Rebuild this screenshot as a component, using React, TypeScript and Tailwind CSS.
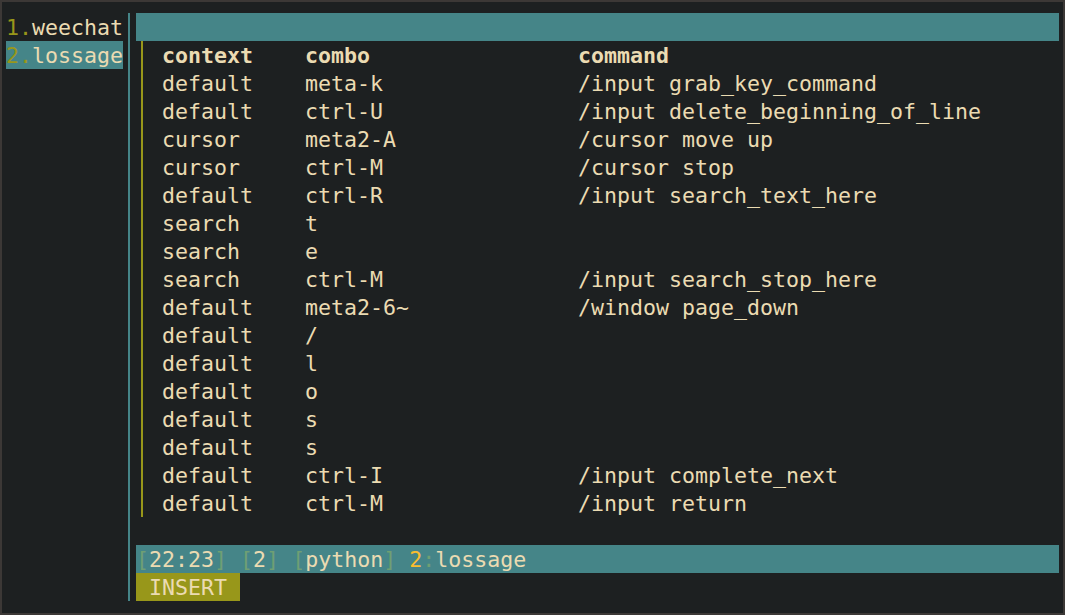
import React from 'react';

const rows = [
  { context: 'default', combo: 'meta-k', command: '/input grab_key_command' },
  { context: 'default', combo: 'ctrl-U', command: '/input delete_beginning_of_line' },
  { context: 'cursor', combo: 'meta2-A', command: '/cursor move up' },
  { context: 'cursor', combo: 'ctrl-M', command: '/cursor stop' },
  { context: 'default', combo: 'ctrl-R', command: '/input search_text_here' },
  { context: 'search', combo: 't', command: '' },
  { context: 'search', combo: 'e', command: '' },
  { context: 'search', combo: 'ctrl-M', command: '/input search_stop_here' },
  { context: 'default', combo: 'meta2-6~', command: '/window page_down' },
  { context: 'default', combo: '/', command: '' },
  { context: 'default', combo: 'l', command: '' },
  { context: 'default', combo: 'o', command: '' },
  { context: 'default', combo: 's', command: '' },
  { context: 'default', combo: 's', command: '' },
  { context: 'default', combo: 'ctrl-I', command: '/input complete_next' },
  { context: 'default', combo: 'ctrl-M', command: '/input return' },
];

function Line({ a, b, c, bold }: { a: string; b: string; c: string; bold?: boolean }) {
  return (
    <div className={`flex h-[28px] ${bold ? 'font-bold' : ''}`}>
      <span className="w-[143px] shrink-0 whitespace-pre">{a}</span>
      <span className="w-[273px] shrink-0 whitespace-pre">{b}</span>
      <span className="whitespace-pre">{c}</span>
    </div>
  );
}

export default function App() {
  return (
    <div
      className="w-[1065px] h-[615px] bg-[#1d2021] border-2 border-[#3c3836] pl-[4px] pr-[4px] pt-[11px] pb-[12px] text-[#ebdbb2] text-[21.6px] leading-[30px]"
      style={{ fontFamily: '"DejaVu Sans Mono", "Liberation Mono", monospace' }}
    >
      <div className="flex h-[588px]">
        {/* buffer list */}
        <div className="w-[117px] shrink-0">
          <div className="h-[28px] whitespace-pre">
            <span className="text-[#98971a]">1.</span>weechat
          </div>
          <div className="h-[28px] whitespace-pre bg-[#458588]">
            <span className="text-[#98971a]">2.</span>lossage
          </div>
        </div>

        {/* separator */}
        <div className="w-[13px] shrink-0">
          <div className="ml-[5px] w-[2px] h-full bg-[#458588]" />
        </div>

        {/* main window */}
        <div className="w-[923px] shrink-0 flex flex-col">
          <div className="h-[28px] bg-[#458588]" />
          <div className="h-[504px] flex">
            <div className="w-[13px] shrink-0">
              <div className="ml-[5px] w-[2px] h-[476px] bg-[#98971a]" />
            </div>
            <div className="pl-[13px]">
              <Line a="context" b="combo" c="command" bold />
              {rows.map((r, i) => (
                <Line key={i} a={r.context} b={r.combo} c={r.command} />
              ))}
            </div>
          </div>
          <div className="h-[28px] bg-[#458588] whitespace-pre">
            <span className="text-[#6f9f74]">[</span>22:23<span className="text-[#6f9f74]">]</span>{' '}
            <span className="text-[#6f9f74]">[</span>2<span className="text-[#6f9f74]">]</span>{' '}
            <span className="text-[#6f9f74]">[</span>python<span className="text-[#6f9f74]">]</span>{' '}
            <span className="text-[#fabd2f]">2</span>
            <span className="text-[#6f9f74]">:</span>lossage
          </div>
          <div className="h-[28px] flex">
            <span className="w-[104px] h-[28px] bg-[#98971a] whitespace-pre">{' INSERT '}</span>
          </div>
        </div>
      </div>
    </div>
  );
}
